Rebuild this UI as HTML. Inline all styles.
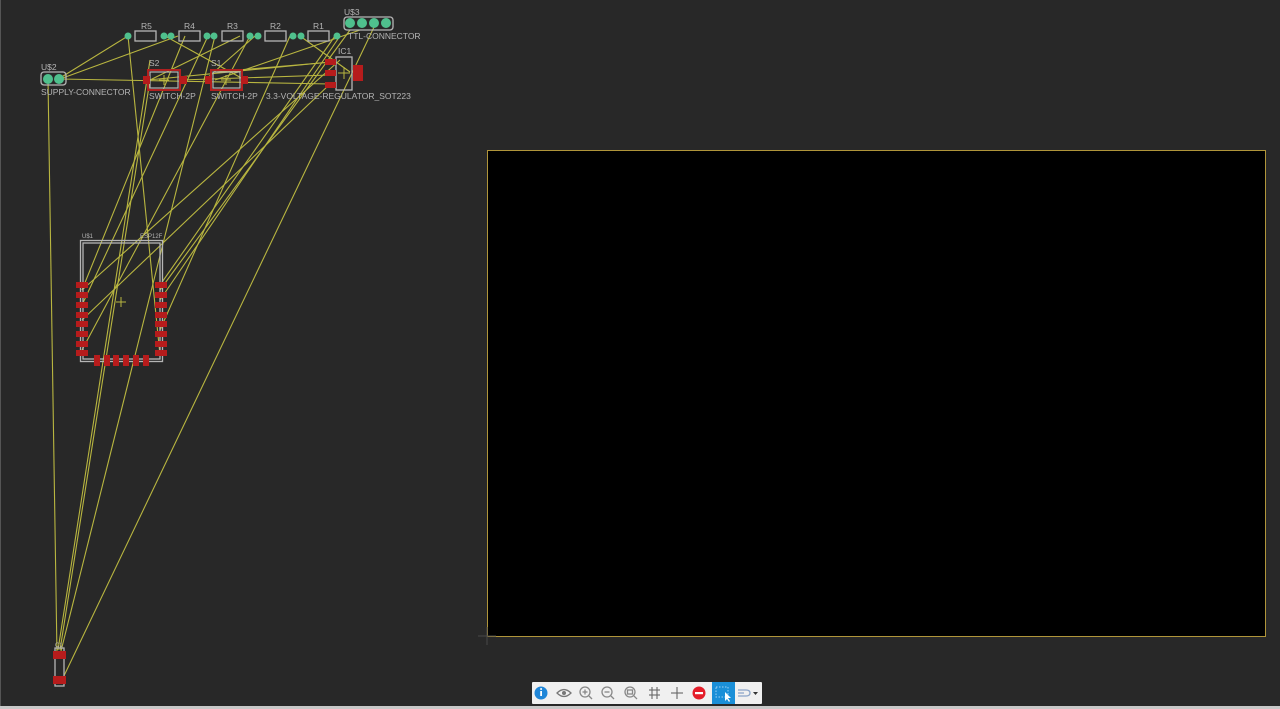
<!DOCTYPE html>
<html><head><style>
html,body{margin:0;padding:0;width:1280px;height:709px;overflow:hidden;background:#282828;font-family:"Liberation Sans",sans-serif}
#c{position:absolute;left:0;top:0}
.tb{position:absolute;left:532px;top:682px;width:230px;height:22px;background:#f0f0f0;border-radius:1px}
</style></head><body>
<svg id="c" width="1280" height="709" xmlns="http://www.w3.org/2000/svg">
<rect x="0" y="0" width="1280" height="709" fill="#282828"/>
<rect x="0" y="0" width="1" height="709" fill="#555"/>
<rect x="0" y="706" width="1280" height="3" fill="#c8c8c8"/>
<rect x="487.5" y="150.5" width="778" height="486" fill="#000" stroke="#b0953a" stroke-width="1"/>
<g stroke="#484848" stroke-width="1"><line x1="478" y1="636" x2="496" y2="636"/><line x1="487" y1="627" x2="487" y2="645"/></g>
<g stroke="#b9b640" stroke-width="1.1" fill="none">
<line x1="60" y1="78" x2="128" y2="36"/>
<line x1="48" y1="80" x2="57" y2="655"/>
<line x1="60" y1="79" x2="330" y2="84"/>
<line x1="60" y1="79" x2="178" y2="36"/>
<line x1="128" y1="36" x2="160" y2="355"/>
<line x1="150" y1="60" x2="58" y2="650"/>
<line x1="165" y1="36" x2="245" y2="80"/>
<line x1="185" y1="36" x2="82" y2="290"/>
<line x1="208" y1="36" x2="82" y2="305"/>
<line x1="215" y1="36" x2="60" y2="655"/>
<line x1="240" y1="36" x2="150" y2="80"/>
<line x1="250" y1="36" x2="82" y2="350"/>
<line x1="255" y1="36" x2="205" y2="80"/>
<line x1="290" y1="36" x2="160" y2="330"/>
<line x1="300" y1="36" x2="350" y2="72"/>
<line x1="335" y1="36" x2="160" y2="285"/>
<line x1="340" y1="36" x2="160" y2="300"/>
<line x1="350" y1="30" x2="160" y2="290"/>
<line x1="360" y1="30" x2="215" y2="80"/>
<line x1="375" y1="25" x2="62" y2="680"/>
<line x1="148" y1="80" x2="330" y2="62"/>
<line x1="180" y1="80" x2="330" y2="75"/>
<line x1="215" y1="72" x2="332" y2="62"/>
<line x1="150" y1="80" x2="60" y2="650"/>
<line x1="340" y1="60" x2="82" y2="290"/>
<line x1="330" y1="84" x2="82" y2="320"/>
</g>
<g stroke="#b5b5b5" stroke-width="1.3" fill="none">
<rect x="135" y="31" width="21" height="10"/><rect x="179" y="31" width="21" height="10"/><rect x="222" y="31" width="21" height="10"/><rect x="265" y="31" width="21" height="10"/><rect x="308" y="31" width="21" height="10"/>
<rect x="336" y="57" width="16" height="33"/>
<rect x="80.5" y="240.5" width="82" height="121"/><rect x="83" y="243" width="77" height="116"/>
<rect x="41" y="72" width="25" height="13" rx="3"/>
<rect x="344" y="17" width="49" height="13" rx="3"/>
<rect x="55" y="648" width="9" height="38"/>
</g>
<g stroke="#b02020" stroke-width="2" fill="none"><rect x="148" y="70" width="32" height="20"/><rect x="211" y="70" width="31" height="20"/></g>
<g stroke="#b5b5b5" stroke-width="1.2" fill="none"><rect x="150" y="72" width="28" height="16"/><rect x="213" y="72" width="27" height="16"/></g>
<g fill="#4fc08d">
<circle cx="128" cy="36" r="3.5"/><circle cx="164" cy="36" r="3.5"/><circle cx="171" cy="36" r="3.5"/><circle cx="207" cy="36" r="3.5"/><circle cx="214" cy="36" r="3.5"/><circle cx="250" cy="36" r="3.5"/><circle cx="258" cy="36" r="3.5"/><circle cx="293" cy="36" r="3.5"/><circle cx="301" cy="36" r="3.5"/><circle cx="337" cy="36" r="3.5"/>
<circle cx="48" cy="79" r="5"/><circle cx="59" cy="79" r="5"/>
<circle cx="350" cy="23" r="5"/><circle cx="362" cy="23" r="5"/><circle cx="374" cy="23" r="5"/><circle cx="386" cy="23" r="5"/>
</g>
<g fill="#b61c1c">
<rect x="143" y="76" width="7" height="8"/><rect x="180" y="76" width="7" height="8"/><rect x="205" y="76" width="7" height="8"/><rect x="241" y="76" width="7" height="8"/>
<rect x="325" y="59" width="11" height="6"/><rect x="325" y="70" width="11" height="6"/><rect x="325" y="82" width="11" height="6"/><rect x="353" y="65" width="10" height="16"/>
<rect x="76" y="282" width="12" height="6"/><rect x="76" y="292" width="12" height="6"/><rect x="76" y="302" width="12" height="6"/><rect x="76" y="312" width="12" height="6"/><rect x="76" y="321" width="12" height="6"/><rect x="76" y="331" width="12" height="6"/><rect x="76" y="341" width="12" height="6"/><rect x="76" y="350" width="12" height="6"/>
<rect x="155" y="282" width="12" height="6"/><rect x="155" y="292" width="12" height="6"/><rect x="155" y="302" width="12" height="6"/><rect x="155" y="312" width="12" height="6"/><rect x="155" y="321" width="12" height="6"/><rect x="155" y="331" width="12" height="6"/><rect x="155" y="341" width="12" height="6"/><rect x="155" y="350" width="12" height="6"/>
<rect x="94" y="355" width="6" height="11"/><rect x="104" y="355" width="6" height="11"/><rect x="113" y="355" width="6" height="11"/><rect x="123" y="355" width="6" height="11"/><rect x="133" y="355" width="6" height="11"/><rect x="143" y="355" width="6" height="11"/>
<rect x="53" y="651" width="13" height="8"/><rect x="53" y="676" width="13" height="8"/>
</g>
<g stroke="#b9b640" stroke-width="1"><line x1="116" y1="302" x2="126" y2="302"/><line x1="121" y1="297" x2="121" y2="307"/>
<line x1="338" y1="73" x2="350" y2="73"/><line x1="344" y1="67" x2="344" y2="79"/>
<line x1="159" y1="80" x2="169" y2="80"/><line x1="164" y1="75" x2="164" y2="85"/>
<line x1="221" y1="80" x2="231" y2="80"/><line x1="226" y1="75" x2="226" y2="85"/></g>
<g fill="#b5b5b5" font-family="Liberation Sans, sans-serif" font-size="8.5">
<text x="141" y="29">R5</text><text x="184" y="29">R4</text><text x="227" y="29">R3</text><text x="270" y="29">R2</text><text x="313" y="29">R1</text>
<text x="344" y="15">U$3</text><text x="348" y="39">TTL-CONNECTOR</text>
<text x="41" y="70">U$2</text><text x="41" y="95">SUPPLY-CONNECTOR</text>
<text x="149" y="66">S2</text><text x="211" y="66">S1</text><text x="338" y="54">IC1</text>
<text x="149" y="99">SWITCH-2P</text><text x="211" y="99">SWITCH-2P</text><text x="266" y="99">3.3-VOLTAGE-REGULATOR_SOT223</text>
<text x="82" y="238" font-size="6">U$1</text><text x="140" y="238" font-size="6">ESP12F</text>
<text x="55" y="647" font-size="6">C1</text>
</g>
</svg>
<div class="tb">
<svg width="230" height="22" xmlns="http://www.w3.org/2000/svg">
<circle cx="9" cy="11" r="6.5" fill="#1f86d8"/><rect x="8.2" y="9" width="1.8" height="5" fill="#fff"/><circle cx="9.1" cy="7" r="1" fill="#fff"/>
<path d="M25 11 Q32 4 39 11 Q32 18 25 11Z" fill="none" stroke="#777" stroke-width="1.3"/><circle cx="32" cy="11" r="2" fill="#777"/>
<g fill="none" stroke="#888" stroke-width="1.3"><circle cx="53" cy="10" r="5"/><line x1="57" y1="14" x2="60" y2="17"/><line x1="50.5" y1="10" x2="55.5" y2="10"/><line x1="53" y1="7.5" x2="53" y2="12.5"/>
<circle cx="75" cy="10" r="5"/><line x1="79" y1="14" x2="82" y2="17"/><line x1="72.5" y1="10" x2="77.5" y2="10"/>
<circle cx="98" cy="10" r="5"/><line x1="102" y1="14" x2="105" y2="17"/><rect x="95.5" y="8" width="5" height="4"/></g>
<g stroke="#666" stroke-width="1.1"><line x1="117" y1="8" x2="128" y2="8"/><line x1="117" y1="13" x2="128" y2="13"/><line x1="120" y1="5" x2="120" y2="17"/><line x1="125" y1="5" x2="125" y2="17"/>
<line x1="139" y1="11" x2="151" y2="11"/><line x1="145" y1="5" x2="145" y2="17"/></g>
<circle cx="167" cy="11" r="6.5" fill="#e41e2a"/><rect x="163" y="10" width="8" height="2.2" fill="#fff"/>
<rect x="180" y="0" width="23" height="22" fill="#1a8fd8"/><rect x="184" y="5" width="12" height="10" fill="none" stroke="#9fd2f5" stroke-dasharray="1.5 1.5"/><path d="M193 10 L193 19 L195 17 L197 20 L198 19 L196 16 L199 16Z" fill="#fff"/>
<path d="M206 8 H214 Q218 8 218 11 Q218 14 214 14 H206 M206 11 H212" fill="none" stroke="#8aa4c8" stroke-width="1.3"/><path d="M221 10 L226 10 L223.5 13Z" fill="#333"/>
</svg>
</div>
</body></html>
